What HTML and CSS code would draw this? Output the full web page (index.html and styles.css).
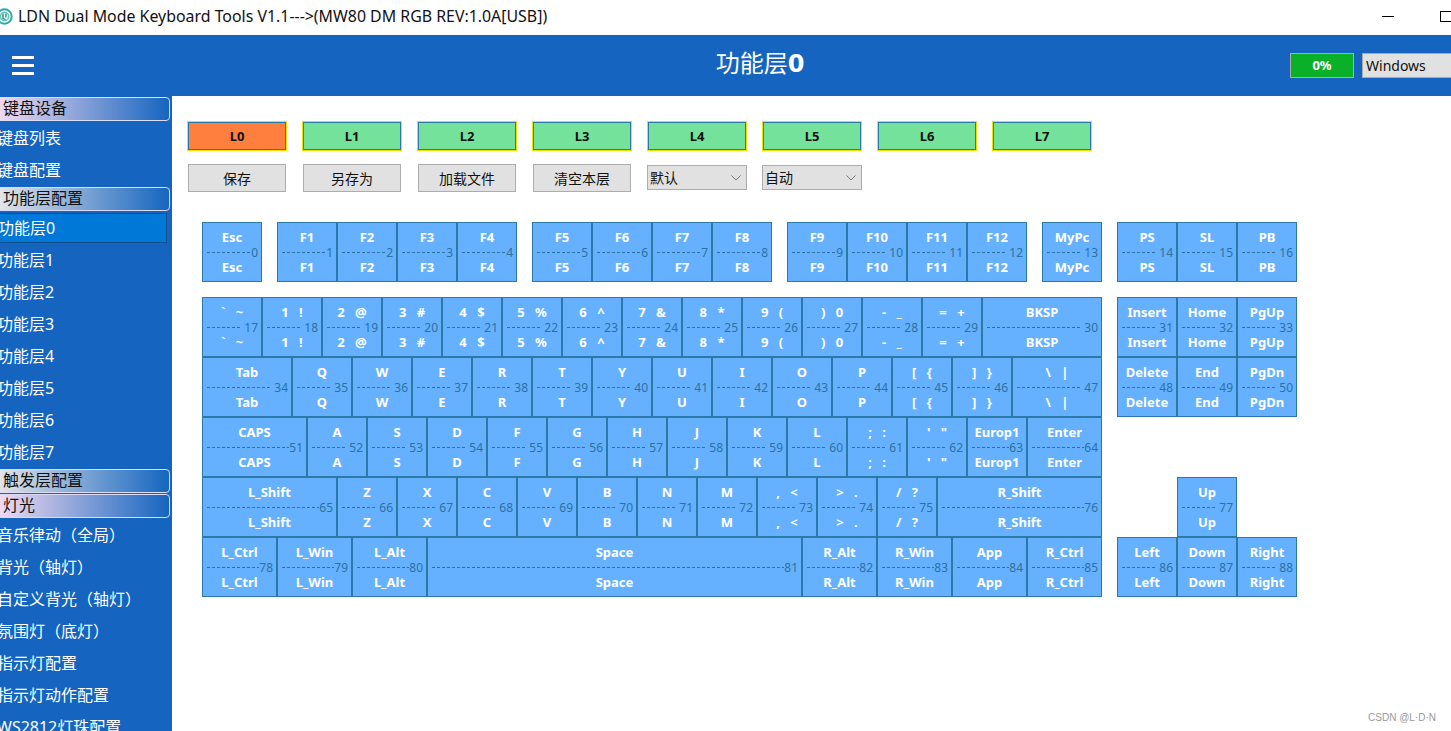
FILE: index.html
```html
<!DOCTYPE html>
<html lang="zh-CN">
<head>
    <meta charset="UTF-8">
    <title>LDN Dual Mode Keyboard Tools</title>
    <link rel="stylesheet" href="styles.css">
</head>
<body>
<div class="titlebar">
    <svg class="app-icon" width="17" height="17" viewBox="0 0 17 17">
        <circle cx="8.5" cy="8.5" r="7.2" fill="none" stroke="#2aa7b8" stroke-width="2"/>
        <circle cx="8.5" cy="8.5" r="4.2" fill="#e8fbf4" stroke="#5fc9a0" stroke-width="1.5"/>
        <path d="M7 5.5v5l2.5 1M10 5.5v4" fill="none" stroke="#1b6f9c" stroke-width="1.2"/>
    </svg>
    <span class="app-title">LDN Dual Mode Keyboard Tools V1.1---&gt;(MW80 DM RGB REV:1.0A[USB])</span>
    <div class="win-btns">
        <span class="win-min"></span>
        <span class="win-max"></span>
    </div>
</div>

<header class="topbar">
    <div class="burger"><span></span><span></span><span></span></div>
    <h1 class="page-title">功能层<b>0</b></h1>
    <div class="top-right">
        <div class="progress">0%</div>
        <div class="os-select">Windows</div>
    </div>
</header>

<div class="body-wrap">
    <nav class="sidebar">
        <div class="menu-head">键盘设备</div>
        <div class="menu-item">键盘列表</div>
        <div class="menu-item">键盘配置</div>
        <div class="menu-head grey">功能层配置</div>
        <div class="menu-item active"><span>功能层0</span></div>
        <div class="menu-item">功能层1</div>
        <div class="menu-item">功能层2</div>
        <div class="menu-item">功能层3</div>
        <div class="menu-item">功能层4</div>
        <div class="menu-item">功能层5</div>
        <div class="menu-item">功能层6</div>
        <div class="menu-item">功能层7</div>
        <div class="menu-head grey">触发层配置</div>
        <div class="menu-head">灯光</div>
        <div class="menu-item">音乐律动（全局）</div>
        <div class="menu-item">背光（轴灯）</div>
        <div class="menu-item">自定义背光（轴灯）</div>
        <div class="menu-item">氛围灯（底灯）</div>
        <div class="menu-item">指示灯配置</div>
        <div class="menu-item">指示灯动作配置</div>
        <div class="menu-item">WS2812灯珠配置</div>
    </nav>

    <main class="content">
        <div class="layers">
            <button class="layer current">L0</button>
            <button class="layer">L1</button>
            <button class="layer">L2</button>
            <button class="layer">L3</button>
            <button class="layer">L4</button>
            <button class="layer">L5</button>
            <button class="layer">L6</button>
            <button class="layer">L7</button>
        </div>
        <div class="actions">
            <button class="action">保存</button>
            <button class="action">另存为</button>
            <button class="action">加载文件</button>
            <button class="action">清空本层</button>
            <div class="dropdown">默认<svg width="10" height="6" viewBox="0 0 10 6"><path d="M.5 .5l4.5 4.5 4.5-4.5" fill="none" stroke="#777"/></svg></div>
            <div class="dropdown">自动<svg width="10" height="6" viewBox="0 0 10 6"><path d="M.5 .5l4.5 4.5 4.5-4.5" fill="none" stroke="#777"/></svg></div>
        </div>

        <div class="keyboard">
            <div class="key-row fn-row">
                <div class="cluster">
                    <div class="key tight"><b>Esc</b><i><u></u>0</i><b>Esc</b></div>
                </div>
                <div class="cluster">
                    <div class="key tight"><b>F1</b><i><u></u>1</i><b>F1</b></div>
                    <div class="key tight"><b>F2</b><i><u></u>2</i><b>F2</b></div>
                    <div class="key tight"><b>F3</b><i><u></u>3</i><b>F3</b></div>
                    <div class="key tight"><b>F4</b><i><u></u>4</i><b>F4</b></div>
                </div>
                <div class="cluster">
                    <div class="key tight"><b>F5</b><i><u></u>5</i><b>F5</b></div>
                    <div class="key tight"><b>F6</b><i><u></u>6</i><b>F6</b></div>
                    <div class="key tight"><b>F7</b><i><u></u>7</i><b>F7</b></div>
                    <div class="key tight"><b>F8</b><i><u></u>8</i><b>F8</b></div>
                </div>
                <div class="cluster">
                    <div class="key tight"><b>F9</b><i><u></u>9</i><b>F9</b></div>
                    <div class="key"><b>F10</b><i><u></u>10</i><b>F10</b></div>
                    <div class="key"><b>F11</b><i><u></u>11</i><b>F11</b></div>
                    <div class="key"><b>F12</b><i><u></u>12</i><b>F12</b></div>
                </div>
                <div class="cluster">
                    <div class="key"><b>MyPc</b><i><u></u>13</i><b>MyPc</b></div>
                </div>
                <div class="cluster">
                    <div class="key"><b>PS</b><i><u></u>14</i><b>PS</b></div>
                    <div class="key"><b>SL</b><i><u></u>15</i><b>SL</b></div>
                    <div class="key"><b>PB</b><i><u></u>16</i><b>PB</b></div>
                </div>
            </div>

            <div class="key-block">
                <div class="main-keys">
                    <div class="key-row">
                        <div class="key"><b>` ~</b><i><u></u>17</i><b>` ~</b></div>
                        <div class="key"><b>1 !</b><i><u></u>18</i><b>1 !</b></div>
                        <div class="key"><b>2 @</b><i><u></u>19</i><b>2 @</b></div>
                        <div class="key"><b>3 #</b><i><u></u>20</i><b>3 #</b></div>
                        <div class="key"><b>4 $</b><i><u></u>21</i><b>4 $</b></div>
                        <div class="key"><b>5 %</b><i><u></u>22</i><b>5 %</b></div>
                        <div class="key"><b>6 ^</b><i><u></u>23</i><b>6 ^</b></div>
                        <div class="key"><b>7 &amp;</b><i><u></u>24</i><b>7 &amp;</b></div>
                        <div class="key"><b>8 *</b><i><u></u>25</i><b>8 *</b></div>
                        <div class="key"><b>9 (</b><i><u></u>26</i><b>9 (</b></div>
                        <div class="key"><b>) 0</b><i><u></u>27</i><b>) 0</b></div>
                        <div class="key"><b>- _</b><i><u></u>28</i><b>- _</b></div>
                        <div class="key"><b>= +</b><i><u></u>29</i><b>= +</b></div>
                        <div class="key w120"><b>BKSP</b><i><u></u>30</i><b>BKSP</b></div>
                    </div>
                    <div class="key-row">
                        <div class="key w90"><b>Tab</b><i><u></u>34</i><b>Tab</b></div>
                        <div class="key"><b>Q</b><i><u></u>35</i><b>Q</b></div>
                        <div class="key"><b>W</b><i><u></u>36</i><b>W</b></div>
                        <div class="key"><b>E</b><i><u></u>37</i><b>E</b></div>
                        <div class="key"><b>R</b><i><u></u>38</i><b>R</b></div>
                        <div class="key"><b>T</b><i><u></u>39</i><b>T</b></div>
                        <div class="key"><b>Y</b><i><u></u>40</i><b>Y</b></div>
                        <div class="key"><b>U</b><i><u></u>41</i><b>U</b></div>
                        <div class="key"><b>I</b><i><u></u>42</i><b>I</b></div>
                        <div class="key"><b>O</b><i><u></u>43</i><b>O</b></div>
                        <div class="key"><b>P</b><i><u></u>44</i><b>P</b></div>
                        <div class="key"><b>[ {</b><i><u></u>45</i><b>[ {</b></div>
                        <div class="key"><b>] }</b><i><u></u>46</i><b>] }</b></div>
                        <div class="key w90"><b>\ |</b><i><u></u>47</i><b>\ |</b></div>
                    </div>
                    <div class="key-row">
                        <div class="key w105 tight"><b>CAPS</b><i><u></u>51</i><b>CAPS</b></div>
                        <div class="key"><b>A</b><i><u></u>52</i><b>A</b></div>
                        <div class="key"><b>S</b><i><u></u>53</i><b>S</b></div>
                        <div class="key"><b>D</b><i><u></u>54</i><b>D</b></div>
                        <div class="key"><b>F</b><i><u></u>55</i><b>F</b></div>
                        <div class="key"><b>G</b><i><u></u>56</i><b>G</b></div>
                        <div class="key"><b>H</b><i><u></u>57</i><b>H</b></div>
                        <div class="key"><b>J</b><i><u></u>58</i><b>J</b></div>
                        <div class="key"><b>K</b><i><u></u>59</i><b>K</b></div>
                        <div class="key"><b>L</b><i><u></u>60</i><b>L</b></div>
                        <div class="key"><b>; :</b><i><u></u>61</i><b>; :</b></div>
                        <div class="key"><b>' "</b><i><u></u>62</i><b>' "</b></div>
                        <div class="key tight"><b>Europ1</b><i><u></u>63</i><b>Europ1</b></div>
                        <div class="key w75 tight"><b>Enter</b><i><u></u>64</i><b>Enter</b></div>
                    </div>
                    <div class="key-row">
                        <div class="key w135 tight"><b>L_Shift</b><i><u></u>65</i><b>L_Shift</b></div>
                        <div class="key"><b>Z</b><i><u></u>66</i><b>Z</b></div>
                        <div class="key"><b>X</b><i><u></u>67</i><b>X</b></div>
                        <div class="key"><b>C</b><i><u></u>68</i><b>C</b></div>
                        <div class="key"><b>V</b><i><u></u>69</i><b>V</b></div>
                        <div class="key"><b>B</b><i><u></u>70</i><b>B</b></div>
                        <div class="key"><b>N</b><i><u></u>71</i><b>N</b></div>
                        <div class="key"><b>M</b><i><u></u>72</i><b>M</b></div>
                        <div class="key"><b>, &lt;</b><i><u></u>73</i><b>, &lt;</b></div>
                        <div class="key"><b>&gt; .</b><i><u></u>74</i><b>&gt; .</b></div>
                        <div class="key"><b>/ ?</b><i><u></u>75</i><b>/ ?</b></div>
                        <div class="key w165 tight"><b>R_Shift</b><i><u></u>76</i><b>R_Shift</b></div>
                    </div>
                    <div class="key-row">
                        <div class="key w75 tight"><b>L_Ctrl</b><i><u></u>78</i><b>L_Ctrl</b></div>
                        <div class="key w75 tight"><b>L_Win</b><i><u></u>79</i><b>L_Win</b></div>
                        <div class="key w75 tight"><b>L_Alt</b><i><u></u>80</i><b>L_Alt</b></div>
                        <div class="key w375 tight"><b>Space</b><i><u></u>81</i><b>Space</b></div>
                        <div class="key w75 tight"><b>R_Alt</b><i><u></u>82</i><b>R_Alt</b></div>
                        <div class="key w75 tight"><b>R_Win</b><i><u></u>83</i><b>R_Win</b></div>
                        <div class="key w75 tight"><b>App</b><i><u></u>84</i><b>App</b></div>
                        <div class="key w75 tight"><b>R_Ctrl</b><i><u></u>85</i><b>R_Ctrl</b></div>
                    </div>
                </div>

                <div class="nav-keys">
                    <div class="key-row">
                        <div class="key"><b>Insert</b><i><u></u>31</i><b>Insert</b></div>
                        <div class="key"><b>Home</b><i><u></u>32</i><b>Home</b></div>
                        <div class="key"><b>PgUp</b><i><u></u>33</i><b>PgUp</b></div>
                    </div>
                    <div class="key-row">
                        <div class="key"><b>Delete</b><i><u></u>48</i><b>Delete</b></div>
                        <div class="key"><b>End</b><i><u></u>49</i><b>End</b></div>
                        <div class="key"><b>PgDn</b><i><u></u>50</i><b>PgDn</b></div>
                    </div>
                    <div class="key-row spacer"></div>
                    <div class="key-row center">
                        <div class="key"><b>Up</b><i><u></u>77</i><b>Up</b></div>
                    </div>
                    <div class="key-row">
                        <div class="key"><b>Left</b><i><u></u>86</i><b>Left</b></div>
                        <div class="key"><b>Down</b><i><u></u>87</i><b>Down</b></div>
                        <div class="key"><b>Right</b><i><u></u>88</i><b>Right</b></div>
                    </div>
                </div>
            </div>
        </div>
    </main>
</div>

<div class="watermark">CSDN @L·D·N</div>
</body>
</html>
```

FILE: styles.css
```css
* {
    box-sizing: border-box;
}

html, body {
    margin: 0;
    height: 731px;
    overflow: hidden;
}

body {
    font-family: "Noto Sans", "Noto Sans CJK SC", sans-serif;
    background-color: white;
    position: relative;
}

/* window title */
.titlebar {
    height: 35px;
    padding-bottom: 3px;
    display: flex;
    align-items: center;
    color: #111;
    overflow: hidden;
}

.app-icon {
    margin-left: -4px;
    flex: none;
}

.app-title {
    margin-left: 5px;
    font-size: 15.9px;
    white-space: nowrap;
}

.win-btns {
    margin-left: auto;
    display: flex;
    align-items: center;
    gap: 46px;
    margin-right: -10px;
}

.win-min {
    width: 12px;
    height: 1px;
    background-color: black;
}

.win-max {
    width: 21px;
    height: 11px;
    border: 1px solid black;
}

/* blue header */
.topbar {
    height: 61px;
    background-color: #1565c0;
    display: flex;
    align-items: center;
    padding-left: 12px;
}

.burger {
    width: 22px;
    display: flex;
    flex-direction: column;
    gap: 5px;
}

.burger span {
    height: 3px;
    background-color: white;
}

.page-title {
    flex: 1;
    margin: 0;
    text-align: center;
    color: white;
    font-size: 24px;
    font-weight: normal;
    line-height: 30px;
    padding: 0 0 4px 196px;
}

.page-title b {
    font-family: "DejaVu Sans", sans-serif;
}

.top-right {
    display: flex;
    gap: 8px;
    margin-right: -30px;
}

.progress {
    width: 64px;
    height: 25px;
    background-color: #09b028;
    border: 1px solid #aaa;
    color: white;
    font-size: 13px;
    font-weight: bold;
    line-height: 23px;
    text-align: center;
}

.os-select {
    width: 119px;
    height: 25px;
    background-color: #e1e1e1;
    border: 1px solid #aaa;
    color: #111;
    font-size: 14px;
    line-height: 23px;
    padding-left: 3px;
}

.body-wrap {
    display: flex;
    height: 635px;
}

/* left menu */
.sidebar {
    width: 172px;
    flex: none;
    background-color: #1565c0;
    overflow: hidden;
    font-size: 16px;
}

.menu-head {
    height: 24px;
    width: 176px;
    margin: 1px 0 1px -6px;
    padding-left: 8px;
    line-height: 20px;
    color: #111;
    border: 1px solid #dcdcf5;
    border-radius: 4px;
    background: linear-gradient(to right, #f8dcf0, #1565c0);
}

.menu-head.grey {
    background: linear-gradient(to right, #e8e8e8, #1565c0);
}

.menu-item {
    height: 32px;
    line-height: 32px;
    margin-left: -3px;
    color: white;
    white-space: nowrap;
}

.menu-item.active span {
    display: block;
    height: 30px;
    width: 170px;
    margin-top: 1px;
    line-height: 28px;
    background-color: #0078d7;
    border: 1px solid #0d4f8c;
    float: left;
}

/* buttons above the keyboard */
.content {
    flex: 1;
    padding: 25px 0 0 15px;
}

.layers {
    display: flex;
    gap: 15px;
}

.layer {
    width: 100px;
    height: 30px;
    padding: 0;
    background-color: #75e29b;
    border: 1px solid #f0e000;
    box-shadow: inset 0 0 0 1px #2a7aa5;
    font-family: "Noto Sans", sans-serif;
    font-size: 13px;
    font-weight: bold;
    color: #111;
}

.layer.current {
    background-color: #ff7f3f;
}

.actions {
    display: flex;
    gap: 15px;
    margin-top: 13px;
    align-items: flex-start;
}

.action {
    width: 98px;
    height: 28px;
    margin: 0 1px;
    padding: 0 0 1px;
    background-color: #e1e1e1;
    border: 1px solid #adadad;
    font-family: "Noto Sans CJK SC", sans-serif;
    font-size: 14px;
    color: #111;
}

.dropdown {
    width: 100px;
    height: 25px;
    margin-top: 1px;
    padding: 0 5px 0 2px;
    background-color: #e1e1e1;
    border: 1px solid #adadad;
    font-size: 14px;
    line-height: 23px;
    color: #111;
    display: flex;
    justify-content: space-between;
    align-items: center;
}

/* keyboard */
.keyboard {
    margin: 30px 0 0 15px;
}

.fn-row {
    gap: 15px;
    margin-bottom: 15px;
}

.cluster,
.key-row {
    display: flex;
}

.key-block {
    display: flex;
    gap: 15px;
}

.main-keys {
    width: 900px;
}

.spacer {
    height: 60px;
}

.center {
    justify-content: center;
}

.key {
    width: 60px;
    height: 60px;
    flex: none;
    background-color: #66b1ff;
    border: 1px solid #2a7aa5;
    color: white;
    font-size: 13px;
    display: flex;
    flex-direction: column;
    justify-content: center;
    text-align: center;
}

.key b {
    height: 15px;
    line-height: 15px;
    white-space: pre;
    word-spacing: 7px;
}

.key i {
    height: 15px;
    padding: 0 3px 0 4px;
    display: flex;
    align-items: center;
    gap: 3px;
    font-style: normal;
    font-size: 12px;
    line-height: 15px;
    color: #2a72a0;
}

.key i u {
    flex: 1;
    height: 1px;
    background: repeating-linear-gradient(to right, #2a72a0 0 3px, transparent 3px 5px);
}

.key.tight i {
    gap: 0;
}

.w75 { width: 75px; }
.w90 { width: 90px; }
.w105 { width: 105px; }
.w120 { width: 120px; }
.w135 { width: 135px; }
.w165 { width: 165px; }
.w375 { width: 375px; }

.watermark {
    position: absolute;
    right: 15px;
    bottom: 8px;
    font-family: "Liberation Sans", sans-serif;
    font-size: 10px;
    color: #999;
}
```
